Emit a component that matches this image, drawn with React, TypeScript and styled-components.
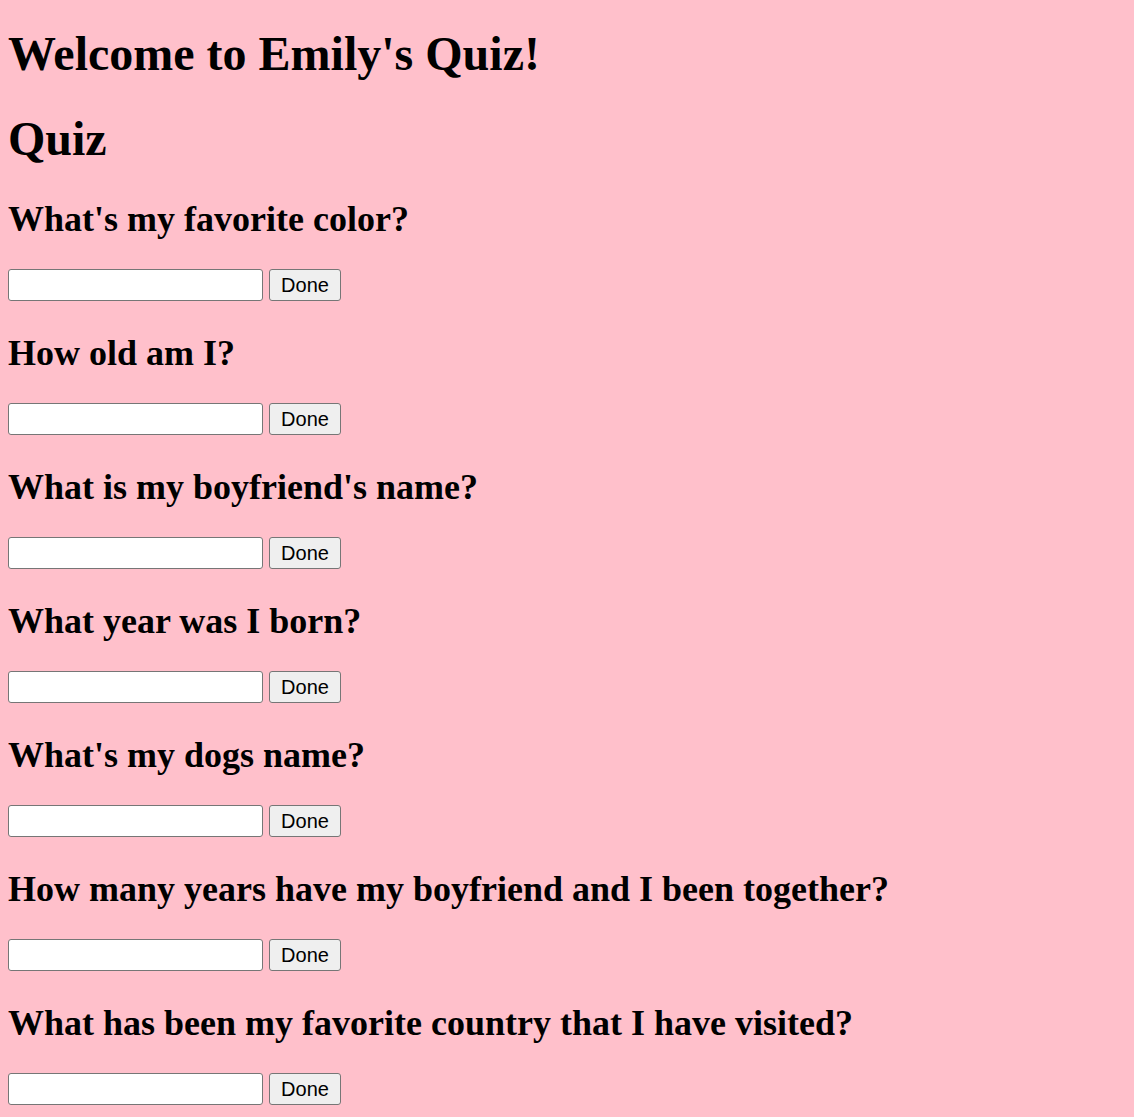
import React from 'react';
import styled, { createGlobalStyle } from 'styled-components';

const GlobalStyle = createGlobalStyle`
  html, body {
    background: pink;
  }
  body {
    margin: 8px;
    font-family: "Liberation Serif", "Times New Roman", serif;
    color: #000;
  }
`;

const Page = styled.div({
  display: 'flex',
  flexDirection: 'column'
});

const Title = styled.h1({
  fontSize: '48px',
  fontWeight: 'bold',
  lineHeight: '53px',
  margin: '19px 0 32px'
});

const SectionTitle = styled.h1({
  fontSize: '48px',
  fontWeight: 'bold',
  lineHeight: '53px',
  margin: '0 0 34px'
});

const Question = styled.h2({
  fontSize: '36px',
  fontWeight: 'bold',
  lineHeight: '40px',
  margin: '0 0 30px'
});

const AnswerRow = styled.div({
  display: 'flex',
  alignItems: 'flex-start',
  gap: '6px',
  paddingBottom: '2px',
  marginBottom: '30px'
});

const AnswerInput = styled.input({
  boxSizing: 'border-box',
  width: '255px',
  height: '32px',
  padding: '1px 3px',
  border: '1px solid #767676',
  borderRadius: '3px',
  background: '#fff',
  fontSize: '20px',
  fontFamily: '"Liberation Sans", Arial, sans-serif'
});

const DoneButton = styled.button({
  boxSizing: 'border-box',
  width: '72px',
  height: '32px',
  padding: '0',
  border: '1px solid #767676',
  borderRadius: '3px',
  background: '#efefef',
  color: '#000',
  fontSize: '20px',
  fontFamily: '"Liberation Sans", Arial, sans-serif'
});

const questions = [
  "What's my favorite color?",
  'How old am I?',
  "What is my boyfriend's name?",
  'What year was I born?',
  "What's my dogs name?",
  'How many years have my boyfriend and I been together?',
  'What has been my favorite country that I have visited?'
];

export default function App() {
  return (
    <>
      <GlobalStyle />
      <Page>
        <Title>Welcome to Emily's Quiz!</Title>
        <SectionTitle>Quiz</SectionTitle>
        {questions.map((q) => (
          <React.Fragment key={q}>
            <Question>{q}</Question>
            <AnswerRow>
              <AnswerInput type="text" />
              <DoneButton>Done</DoneButton>
            </AnswerRow>
          </React.Fragment>
        ))}
      </Page>
    </>
  );
}
